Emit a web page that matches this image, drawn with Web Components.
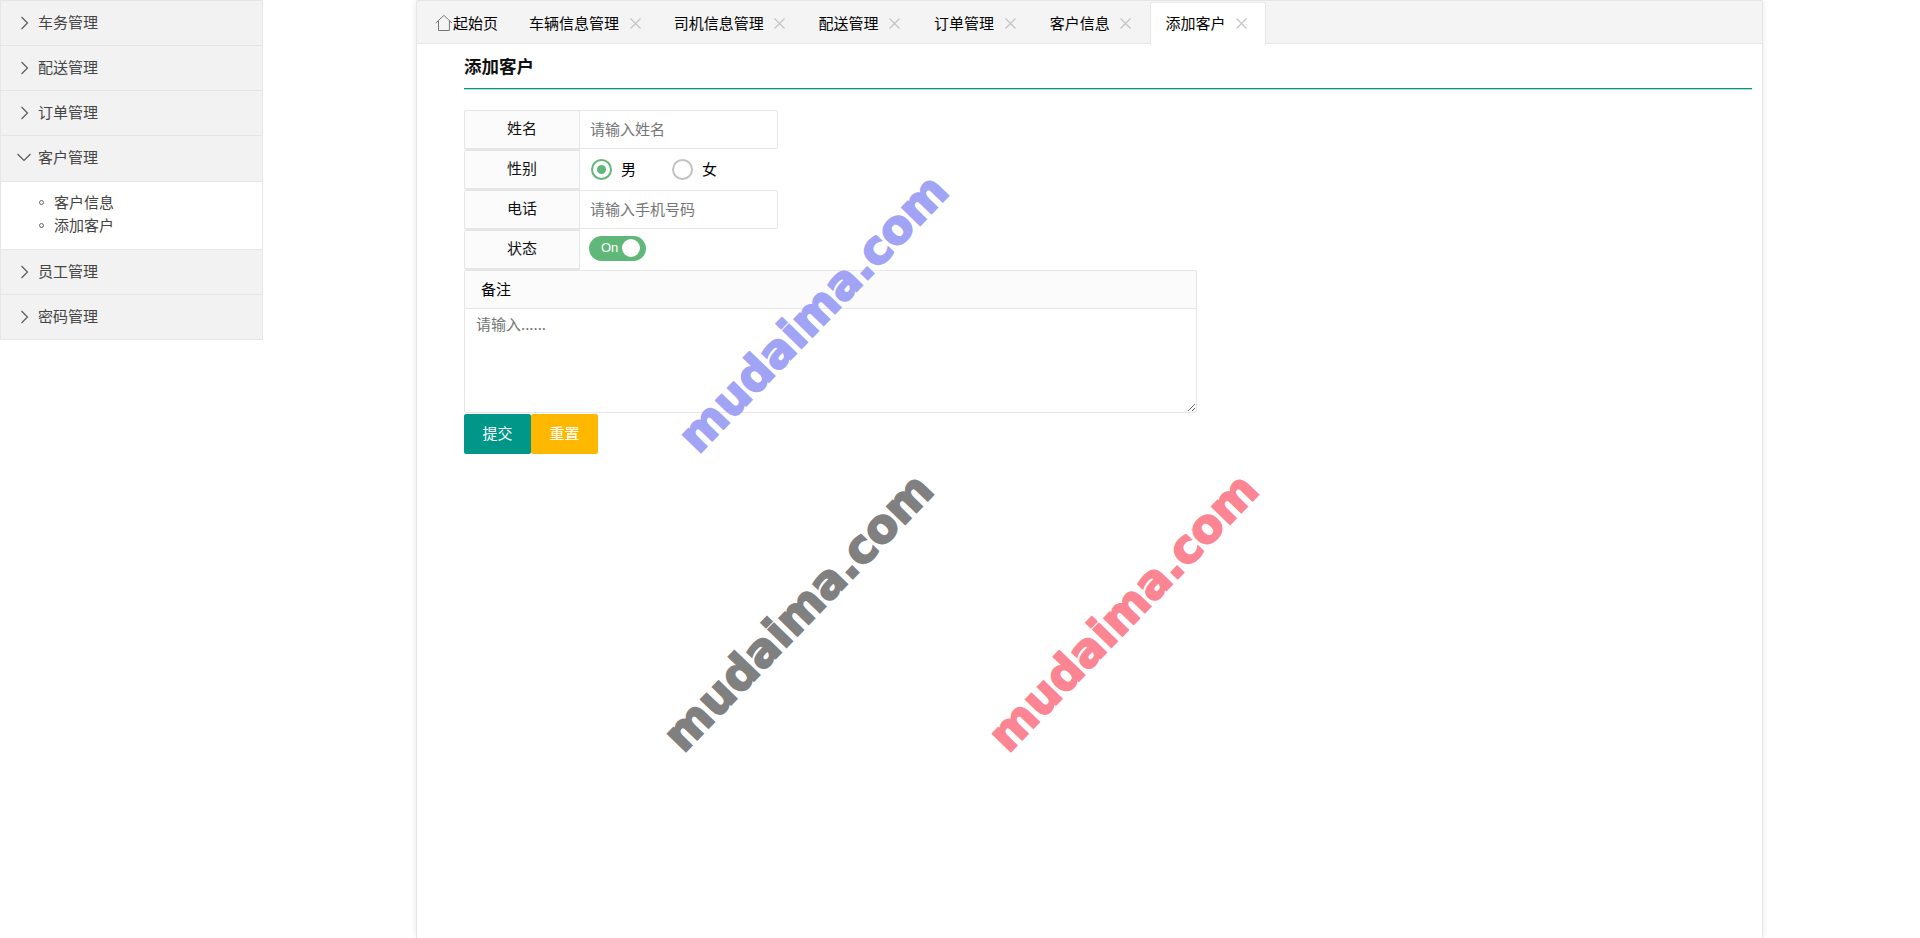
<!DOCTYPE html>
<html lang="zh-CN">
<head>
<meta charset="utf-8">
<title>添加客户</title>
<style>
html,body{margin:0;padding:0;height:100%;background:#fff;overflow:hidden}
body{font:15px/1.6 "Noto Sans CJK SC","Liberation Sans",sans-serif;color:#000}
</style>
</head>
<body>
<template id="t-shell">
<style>
:host{display:flex;align-items:flex-start;position:relative;width:1920px;height:938px;overflow:hidden}
.side{flex:0 0 263px}
.main{flex:0 0 1347px;margin-left:153px;height:100%}
</style>
<div class="side"><slot name="side"></slot></div>
<div class="main"><slot name="main"></slot></div>
<slot name="over"></slot>
</template>

<template id="t-nav">
<style>:host{display:block;box-sizing:border-box;width:263px;border:1px solid #e6e6e6;border-bottom:0}</style>
<slot></slot>
</template>

<template id="t-navgroup">
<style>
:host{display:block;border-bottom:1px solid #e6e6e6}
.h{display:flex;align-items:center;box-sizing:border-box;height:44px;background:#f2f2f2;padding:0 0 2px 37px;position:relative;color:#444}
:host([open]) .h{height:45px;padding-bottom:4px}
svg{position:absolute;left:15.5px;top:15px;width:14px;height:14px;fill:none;stroke:#555;stroke-width:1.1}
.b{display:none;border-top:1px solid #e6e6e6;background:#fff;padding:8px 15px 13px 53px;line-height:23px;color:#444}
:host([open]) .b{display:block}
</style>
<div class="h"><svg viewBox="0 0 14 14"><path id="p" d="M4.5 1 L10.5 7 L4.5 13"/></svg><span id="l"></span></div>
<div class="b"><slot></slot></div>
</template>

<template id="t-subitem">
<style>
:host{display:block;position:relative}
:host::before{content:"";position:absolute;left:-15px;top:10px;width:5px;height:5px;box-sizing:border-box;border:1px solid #666;border-radius:50%}
</style>
<slot></slot>
</template>

<template id="t-card">
<style>
:host{display:block;box-sizing:border-box;height:100%;border:1px solid #e6e6e6;border-bottom:0;border-radius:2px 2px 0 0;box-shadow:0 0 6px rgba(0,0,0,.09);background:#fff}
.bar{display:flex;height:43px;box-sizing:border-box;background:#f4f4f4;border-bottom:1px solid #e6e6e6;padding-top:1px}
.c{padding:0 10px 0 47px}
</style>
<div class="bar"><slot name="tabs"></slot></div>
<div class="c"><slot></slot></div>
</template>

<template id="t-tab">
<style>
:host{display:flex;align-items:center;box-sizing:border-box;height:43px;padding-left:15px;color:#000;white-space:nowrap;flex:none;padding-bottom:1px;position:relative}
:host([active]){background:#fff;box-shadow:inset 1px 0 0 #e6e6e6,inset -1px 0 0 #e6e6e6,inset 0 1px 0 #eee;border-radius:2px 2px 0 0}
.x{width:11px;height:11px;margin:1px 0 0 10.5px;stroke:#c2c2c2;stroke-width:1.1;fill:none}
.home{width:18px;height:18px;margin-left:3px;fill:none;stroke:#777;stroke-width:1;flex:none}
</style>
<svg class="home" id="home" viewBox="0 0 18 18"><path d="M.8 9 L8.9 1.4 L17 9 M3.5 7 V16.5 H14.4 V7"/></svg>
<slot></slot>
<svg class="x" id="x" viewBox="0 0 11 11"><path d="M.5 .5 L10.5 10.5 M10.5 .5 L.5 10.5"/></svg>
</template>

<template id="t-heading">
<style>
:host{display:block;height:45px;box-sizing:border-box;border-bottom:1px solid #009688;box-shadow:0 1px 0 rgba(0,150,136,.3);font-weight:700;font-size:17.5px;line-height:43px;color:#111}
</style>
<slot></slot>
</template>

<template id="t-row">
<style>
:host{display:flex;height:40px;box-sizing:border-box;align-items:flex-start;width:314px}
.l{flex:0 0 116px;height:40px;box-sizing:border-box;border:1px solid #e6e6e6;border-bottom-width:2px;background:#fbfbfb;border-radius:2px 0 0 2px;text-align:center;line-height:34px;color:#111}
.r{flex:1;min-width:0;display:flex}
</style>
<div class="l" id="l"></div>
<div class="r"><slot></slot></div>
</template>

<template id="t-input">
<style>
:host{display:block;flex:1;min-width:0}
input{display:block;width:100%;height:39px;box-sizing:border-box;border:1px solid #e6e6e6;border-left-width:0;border-radius:0 2px 2px 0;padding:0 0 2px 10px;font:15px "Noto Sans CJK SC","Liberation Sans",sans-serif;outline:0;background:#fff;color:#000}
input::placeholder{color:#757575;opacity:1}
</style>
<input id="i" type="text">
</template>

<template id="t-radio">
<style>
:host{display:flex;align-items:center;height:40px;padding-bottom:1px;box-sizing:border-box;width:81px;flex:none}
:host([checked]){margin-left:11px}
.o{width:21px;height:21px;box-sizing:border-box;border:2px solid #c2c2c2;border-radius:50%;margin-right:9px;background:#fff;display:flex;align-items:center;justify-content:center;flex:none}
:host([checked]) .o{border-color:#5fb878}
:host([checked]) .o::after{content:"";width:9px;height:9px;border-radius:50%;background:#5fb878}
.t{margin-top:-2px}
</style>
<span class="o"></span><span class="t"><slot></slot></span>
</template>

<template id="t-switch">
<style>
:host{display:block;margin:6px 0 0 9px;box-sizing:border-box;width:57px;height:25px;border-radius:13px;background:#5fb878;color:#fff;font-size:13px;line-height:24px;padding-left:12px;position:relative;flex:none;font-family:"Liberation Sans",sans-serif}
i{position:absolute;right:6px;top:3px;width:18px;height:18px;border-radius:50%;background:#fff}
</style>
<slot></slot><i></i>
</template>

<template id="t-textbox">
<style>
:host{display:block;width:733px;box-sizing:border-box}
.h{height:38px;box-sizing:border-box;border:1px solid #e6e6e6;border-bottom:0;background:#fbfbfb;padding-left:16px;line-height:35px;border-radius:2px 2px 0 0}
textarea{display:block;width:100%;height:105px;box-sizing:border-box;border:1px solid #e6e6e6;border-radius:0 0 2px 2px;padding:3px 11px;margin:0;font:15px/1.6 "Noto Sans CJK SC","Liberation Sans",sans-serif;outline:0;background:transparent}
textarea::placeholder{color:#757575;opacity:1}
</style>
<div class="h" id="h"></div>
<textarea id="t"></textarea>
</template>

<template id="t-actions">
<style>:host{display:flex;margin-top:1px}</style>
<slot></slot>
</template>

<template id="t-btn">
<style>
:host{display:block;width:67px;height:40px;line-height:38px;text-align:center;color:#fff;border-radius:2px;background:#009688;flex:none}
:host([warm]){background:#ffb800}
</style>
<slot></slot>
</template>

<template id="t-mark">
<style>
:host{position:absolute;display:block;left:var(--x);top:var(--y);transform:translate(-50%,-50%) rotate(-46deg);font:700 46px/1 "DejaVu Sans",sans-serif;color:var(--c);white-space:nowrap;pointer-events:none;-webkit-text-stroke:2px var(--c)}
</style>
<slot></slot>
</template>

<app-shell>
  <side-nav slot="side">
    <nav-group label="车务管理"></nav-group>
    <nav-group label="配送管理"></nav-group>
    <nav-group label="订单管理"></nav-group>
    <nav-group label="客户管理" open>
      <sub-item>客户信息</sub-item>
      <sub-item>添加客户</sub-item>
    </nav-group>
    <nav-group label="员工管理"></nav-group>
    <nav-group label="密码管理"></nav-group>
  </side-nav>
  <tab-card slot="main">
    <tab-item slot="tabs" home noclose style="width:97px">起始页</tab-item>
    <tab-item slot="tabs" style="width:144.7px">车辆信息管理</tab-item>
    <tab-item slot="tabs" style="width:144.7px">司机信息管理</tab-item>
    <tab-item slot="tabs" style="width:115.7px">配送管理</tab-item>
    <tab-item slot="tabs" style="width:115.7px">订单管理</tab-item>
    <tab-item slot="tabs" style="width:115.7px">客户信息</tab-item>
    <tab-item slot="tabs" active style="width:115.7px">添加客户</tab-item>
    <form-heading>添加客户</form-heading>
    <form-row label="姓名" style="margin-top:21px"><text-input placeholder="请输入姓名"></text-input></form-row>
    <form-row label="性别"><x-radio checked>男</x-radio><x-radio>女</x-radio></form-row>
    <form-row label="电话"><text-input placeholder="请输入手机号码"></text-input></form-row>
    <form-row label="状态"><x-switch>On</x-switch></form-row>
    <text-box label="备注" placeholder="请输入......"></text-box>
    <form-actions><x-btn>提交</x-btn><x-btn warm>重置</x-btn></form-actions>
  </tab-card>
  <water-mark slot="over" style="--x:813px;--y:313px;--c:#a1a4f4">mudaima.com</water-mark>
  <water-mark slot="over" style="--x:798px;--y:612px;--c:#808080">mudaima.com</water-mark>
  <water-mark slot="over" style="--x:1123px;--y:612px;--c:#fb8592">mudaima.com</water-mark>
</app-shell>

<script>
function base(id, init){
  return class extends HTMLElement{
    constructor(){
      super();
      const r=this.attachShadow({mode:'open'});
      r.appendChild(document.getElementById(id).content.cloneNode(true));
      if(init) init.call(this,r);
    }
  };
}
const defs={
 'app-shell':base('t-shell'),
 'side-nav':base('t-nav'),
 'nav-group':base('t-navgroup',function(r){
   r.getElementById('l').textContent=this.getAttribute('label');
   if(this.hasAttribute('open')){
     r.getElementById('p').setAttribute('d','M.5 4 L7 10.5 L13.5 4');
     r.querySelector('svg').style.cssText='left:16px;top:14px';
   }
 }),
 'sub-item':base('t-subitem'),
 'tab-card':base('t-card'),
 'tab-item':base('t-tab',function(r){
   if(!this.hasAttribute('home')) r.getElementById('home').remove();
   if(this.hasAttribute('noclose')) r.getElementById('x').remove();
 }),
 'form-heading':base('t-heading'),
 'form-row':base('t-row',function(r){r.getElementById('l').textContent=this.getAttribute('label')}),
 'text-input':base('t-input',function(r){r.getElementById('i').placeholder=this.getAttribute('placeholder')}),
 'x-radio':base('t-radio'),
 'x-switch':base('t-switch'),
 'text-box':base('t-textbox',function(r){
   r.getElementById('h').textContent=this.getAttribute('label');
   r.getElementById('t').placeholder=this.getAttribute('placeholder');
 }),
 'form-actions':base('t-actions'),
 'x-btn':base('t-btn'),
 'water-mark':base('t-mark')
};
for(const k in defs) customElements.define(k,defs[k]);
</script>
</body>
</html>
